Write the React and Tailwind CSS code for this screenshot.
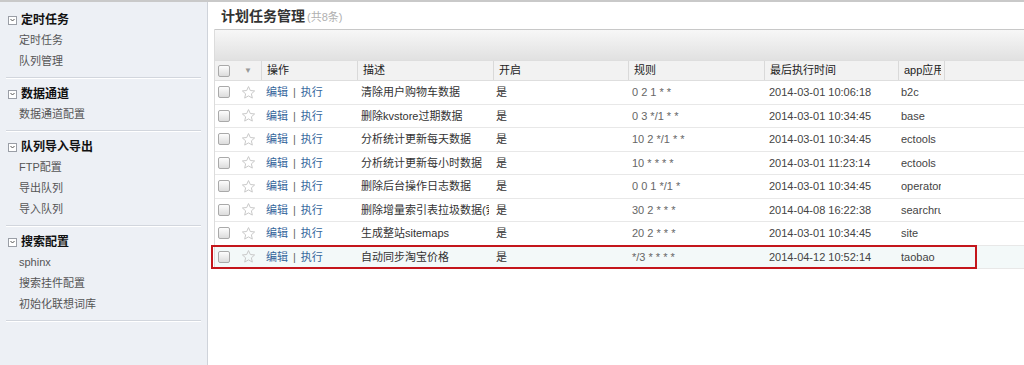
const MENU = [
  { title: '定时任务', items: ['定时任务', '队列管理'], first: true },
  { title: '数据通道', items: ['数据通道配置'] },
  { title: '队列导入导出', items: ['FTP配置', '导出队列', '导入队列'] },
  { title: '搜索配置', items: ['sphinx', '搜索挂件配置', '初始化联想词库'] },
]

const ROWS = [
  { desc: '清除用户购物车数据', rule: '0 2 1 * *', time: '2014-03-01 10:06:18', app: 'b2c' },
  { desc: '删除kvstore过期数据', rule: '0 3 */1 * *', time: '2014-03-01 10:34:45', app: 'base' },
  { desc: '分析统计更新每天数据', rule: '10 2 */1 * *', time: '2014-03-01 10:34:45', app: 'ectools' },
  { desc: '分析统计更新每小时数据', rule: '10 * * * *', time: '2014-03-01 11:23:14', app: 'ectools' },
  { desc: '删除后台操作日志数据', rule: '0 0 1 */1 *', time: '2014-03-01 10:34:45', app: 'operator' },
  { desc: '删除增量索引表拉圾数据(索引)', rule: '30 2 * * *', time: '2014-04-08 16:22:38', app: 'searchrule' },
  { desc: '生成整站sitemaps', rule: '20 2 * * *', time: '2014-03-01 10:34:45', app: 'site' },
  { desc: '自动同步淘宝价格', rule: '*/3 * * * *', time: '2014-04-12 10:52:14', app: 'taobao', marked: true },
]

const COLS = 'grid grid-cols-[20px_26px_96px_136px_135px_136px_134px_46px_1fr]'

function Checkbox() {
  return (
    <span className="block w-[12px] h-[12px] border border-[#a9a9a9] rounded-[2px] bg-gradient-to-b from-[#fdfdfd] to-[#dcdcdc]" />
  )
}

function Star() {
  return (
    <svg width="15" height="15" viewBox="0 0 24 24" fill="none" stroke="#c9c9c9" strokeWidth="1.6" strokeLinejoin="round">
      <polygon points="12,2.5 14.9,8.8 21.8,9.5 16.6,14.1 18.1,20.9 12,17.4 5.9,20.9 7.4,14.1 2.2,9.5 9.1,8.8" />
    </svg>
  )
}

function ToggleBox() {
  return (
    <span className="flex items-center justify-center w-[9px] h-[9px] border border-[#9a9ea6] bg-white">
      <svg width="5" height="4" viewBox="0 0 5 4">
        <path d="M0.5 1 L2.5 3 L4.5 1" stroke="#555" strokeWidth="1" fill="none" />
      </svg>
    </span>
  )
}

export default function App() {
  return (
    <div className="flex w-[1024px] h-[365px] overflow-hidden border-t-2 border-[#c9c9c9] bg-white font-['Liberation_Sans','Noto_Sans_CJK_SC',sans-serif] text-[11px]">
      {/* sidebar */}
      <div className="w-[208px] shrink-0 bg-[#edf0f5] border-r border-[#cfd3da]">
        {MENU.map((g) => (
          <div key={g.title} className={g.first ? 'pt-[8px]' : 'pt-[5px]'}>
            <div className="flex items-center h-[20px] pl-[8px] gap-[4px]">
              <ToggleBox />
              <span className="font-bold text-[12px] text-[#111]">{g.title}</span>
            </div>
            {g.items.map((it) => (
              <div key={it} className="h-[21px] flex items-center pl-[19px] text-[#555]">
                {it}
              </div>
            ))}
            <div className="mt-[5px] mx-[6px] h-[2px] border-t border-[#d2d6dd] border-b border-b-white" />
          </div>
        ))}
      </div>

      {/* main */}
      <div className="flex-1 pl-[6px] min-w-0">
        <div className="h-[27px] flex items-end pb-[6px] pl-[7px] gap-[2px]">
          <span className="font-bold text-[14px] text-[#333] leading-none">计划任务管理</span>
          <span className="text-[11px] text-[#b0b0b0] leading-none">(共8条)</span>
        </div>

        <div className="border-l border-[#dcdcdc]">
          {/* toolbar */}
          <div className="h-[31px] border-t border-[#c8c8c8] bg-gradient-to-b from-[#f7f7f7] to-[#e1e1e1]" />

          {/* header */}
          <div className={`${COLS} h-[21px] bg-[#f2f2f2] border-t border-[#d6d6d6] border-b border-[#dedede] text-[#222]`}>
            <div className="flex items-center pl-[3px]"><Checkbox /></div>
            <div className="flex items-center justify-center text-[#999] text-[8px]">▼</div>
            {['操作', '描述', '开启', '规则', '最后执行时间'].map((h) => (
              <div key={h} className="flex items-center pl-[5px] border-l border-[#d9d9d9] whitespace-nowrap">
                {h}
              </div>
            ))}
            <div className="flex items-center pl-[5px] border-l border-[#d9d9d9]">
              <span className="block w-[37px] overflow-hidden whitespace-nowrap">app应用</span>
            </div>
            <div className="border-l border-[#d9d9d9]" />
          </div>

          {/* rows */}
          {ROWS.map((r) => (
            <div
              key={r.desc}
              className={`${COLS} relative h-[23.5px] border-b border-[#e8e8e8] ${r.marked ? 'bg-[#f3f9f9]' : 'bg-white'}`}
            >
              <div className="flex items-center pl-[3px]"><Checkbox /></div>
              <div className="flex items-center justify-center"><Star /></div>
              <div className="flex items-center pl-[5px] text-[#36679c] whitespace-nowrap">
                编辑<span className="text-[#666] px-[5px]">|</span>执行
              </div>
              <div className="flex items-center pl-[4px] text-[#333]">
                <span className="block w-[128px] overflow-hidden whitespace-nowrap">{r.desc}</span>
              </div>
              <div className="flex items-center pl-[3px] text-[#333]">是</div>
              <div className="flex items-center pl-[4px] text-[#666] whitespace-nowrap">{r.rule}</div>
              <div className="flex items-center pl-[5px] text-[#444] whitespace-nowrap">{r.time}</div>
              <div className="flex items-center pl-[3px] text-[#444]">
                <span className="block w-[40px] overflow-hidden whitespace-nowrap">{r.app}</span>
              </div>
              <div />
              {r.marked && (
                <span className="absolute left-[-4px] top-[-1px] w-[766px] h-[24px] border-2 border-[#c4161c] pointer-events-none" />
              )}
            </div>
          ))}
        </div>
      </div>
    </div>
  )
}
